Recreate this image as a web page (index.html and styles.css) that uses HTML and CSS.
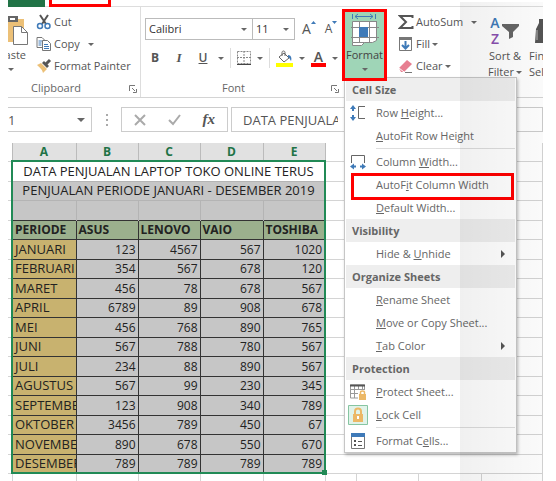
FILE: index.html
```html
<!DOCTYPE html>
<html lang="en">
<head>
<meta charset="utf-8">
<title>Laptop sales</title>
<link rel="stylesheet" href="styles.css">
</head>
<body>
<main class="app">
  <div class="tabs"><span class="tab-file"></span><span class="tab-home"></span></div>

  <section class="ribbon">
    <div class="group clipboard">
      <div class="clip-body">
        <button class="paste" aria-label="Paste">
          <svg width="20" height="30" viewBox="0 0 20 30"><path d="M0 4h16v23H0z" fill="#ecc077"/><path d="M0 1h10v6H0z" fill="#666"/><path d="M2 3h5v2H2z" fill="#fff"/><path d="M5.500 11.500h8l6 6v12h-14z" fill="#fff" stroke="#777"/><path d="M13.500 11.500v6h6" fill="none" stroke="#777"/></svg>
          <span>Paste</span><i class="caret"></i>
        </button>
        <div class="clip-list">
          <button class="cmd"><svg width="16" height="16" viewBox="0 0 16 16"><path d="M4 1l6 9M12 1L6 10" stroke="#555" stroke-width="2"/><circle cx="4" cy="12" r="2.500" fill="none" stroke="#3f7ab8" stroke-width="1.500"/><circle cx="11.500" cy="12" r="2.500" fill="none" stroke="#3f7ab8" stroke-width="1.500"/></svg>Cut</button>
          <button class="cmd"><svg width="16" height="16" viewBox="0 0 16 16"><path d="M1 1.500h5l3 3v7H1z" fill="#fff" stroke="#777"/><path d="M2.500 5h4M2.500 7h3M2.500 9h3" stroke="#3f7ab8"/><path d="M6.500 4.500h5l3 3v7h-8z" fill="#fff" stroke="#777"/><path d="M8 8.500h4M8 10.500h5M8 12.500h5" stroke="#3f7ab8"/></svg>Copy<i class="caret wide"></i></button>
          <button class="cmd"><svg width="16" height="16" viewBox="0 0 16 16"><path d="M1 7l4-2 6 6-4 4c-1-4-3-5-6-8z" fill="#ecc077"/><path d="M6 5l2-2 5 5-2 2z" fill="#555"/><path d="M10 6l4-4" stroke="#555" stroke-width="3"/></svg>Format Painter</button>
        </div>
      </div>
      <div class="label">Clipboard<svg class="launch" width="8" height="8" viewBox="0 0 8 8"><path d="M.5 6V.5H6M3 3l3 3M7.500 4v3.500H4" fill="none" stroke="#777"/></svg></div>
    </div>

    <div class="group font">
      <div class="font-row first">
        <label class="combo family"><select aria-label="Font"><option>Calibri</option></select><i class="caret"></i></label>
        <label class="combo size"><select aria-label="Font size"><option>11</option></select><i class="caret"></i></label>
        <button class="glyph grow" aria-label="Increase font size">A<svg width="5" height="4" viewBox="0 0 5 4"><path d="M0 3l2.500-3L5 3z" fill="#3f7ab8"/></svg></button>
        <button class="glyph shrink" aria-label="Decrease font size">A<svg width="5" height="4" viewBox="0 0 5 4"><path d="M0 0h5L2.500 3z" fill="#3f7ab8"/></svg></button>
      </div>
      <div class="font-row second">
        <button class="glyph letter"><b>B</b></button>
        <button class="glyph letter italic">I</button>
        <button class="glyph letter under">U</button><i class="caret"></i>
        <i class="rule"></i>
        <button class="glyph" aria-label="Borders"><svg width="14" height="14" viewBox="0 0 14 14"><path d="M.5.500h13v12H.5zM7 0v13M0 6.500h14" fill="none" stroke="#888" stroke-dasharray="2 1"/><path d="M0 13.500h14" stroke="#444"/></svg></button><i class="caret"></i>
        <i class="rule"></i>
        <button class="glyph" aria-label="Fill color"><svg width="17" height="17" viewBox="0 0 17 17"><path d="M3 7l5-4 5 5-5 4z" fill="#fff" stroke="#666"/><path d="M6 6V2.500c0-2 3-2 3 0V6" fill="none" stroke="#666"/><path d="M12 5c3 0 4 3 3 6-1-1-1-3-3-4z" fill="#3f7ab8"/><path d="M0 13h17v4H0z" fill="#ff0"/></svg></button><i class="caret"></i>
        <button class="glyph fontcolor">A</button><i class="caret"></i>
      </div>
      <div class="label">Font<svg class="launch" width="8" height="8" viewBox="0 0 8 8"><path d="M.5 6V.5H6M3 3l3 3M7.500 4v3.500H4" fill="none" stroke="#777"/></svg></div>
    </div>

    <div class="format-wrap">
      <button class="format">
        <svg width="30" height="33" viewBox="0 0 30 33"><path d="M2.500 1v5M25.500 1v5M5 3.500h18M8 1L5 3.500 8 6M20 1l3 2.500L20 6" fill="none" stroke="#3f7ab8"/><path d="M2.500 8.500h24v19l-4 2h-8l-3 3h-9v-3z" fill="#fff" stroke="#888"/><path d="M9.500 8v22M19.500 8v21M26.500 8v19M1 14.500h28M1 24.500h28M2.500 29.500h12" fill="none" stroke="#888"/><path d="M9 14h9v10H9z" fill="#3f7ab8"/></svg>
        <span>Format</span><i class="caret"></i>
      </button>
      <div class="menu" role="menu">
        <h2>Cell Size</h2>
        <button><svg width="16" height="16" viewBox="0 0 16 16"><path d="M3 2v4M3 10v4" stroke="#3f7ab8" stroke-width="2"/><path d="M0 4l3-4 3 4zM0 12l3 4 3-4z" fill="#3f7ab8"/><path d="M15 1.500H8.500v12H15" fill="none" stroke="#666"/></svg><span>Row <u>H</u>eight...</span></button>
        <button><span><u>A</u>utoFit Row Height</span></button>
        <hr>
        <button><svg width="16" height="16" viewBox="0 0 16 16"><path d="M1.500 9V1.500h13V9" fill="none" stroke="#666"/><path d="M2 12.500h4M10 12.500h4" stroke="#3f7ab8" stroke-width="2"/><path d="M4 9.500l-4 3 4 3zM12 9.500l4 3-4 3z" fill="#3f7ab8"/></svg><span>Column <u>W</u>idth...</span></button>
        <button class="marked"><span>AutoF<u>i</u>t Column Width</span></button>
        <button><span><u>D</u>efault Width...</span></button>
        <h2>Visibility</h2>
        <button><span>Hide &amp; <u>U</u>nhide</span><i class="more"></i></button>
        <h2>Organize Sheets</h2>
        <button><span><u>R</u>ename Sheet</span></button>
        <button><span><u>M</u>ove or Copy Sheet...</span></button>
        <button><span><u>T</u>ab Color</span><i class="more"></i></button>
        <h2>Protection</h2>
        <button><svg width="16" height="16" viewBox="0 0 16 16"><path d="M.5 1h14v13H.5zM4.500 1v13M8.500 1v13M12.500 1v13M0 5.500h15M0 9.500h15" fill="none" stroke="#999"/><path d="M0 1.500h15" stroke="#555" stroke-width="2"/><path d="M8 6h8v10H8z" fill="#fff"/><path d="M9 10h7v6H9z" fill="#ecb866"/><path d="M10.500 10V8.500c0-2 4-2 4 0V10" fill="none" stroke="#ecb866" stroke-width="1.500"/></svg><span><u>P</u>rotect Sheet...</span></button>
        <button><svg class="lock" width="20" height="20" viewBox="0 0 20 20"><path d="M.5.500h19v19H.5z" fill="#e1f3e9" stroke="#86c5a2"/><path d="M5 9h10v8H5z" fill="#ecb866"/><path d="M7 9V6.500c0-4 6-4 6 0V9" fill="none" stroke="#ecb866" stroke-width="2"/><path d="M10 11v3" stroke="#fff" stroke-width="2"/></svg><span><u>L</u>ock Cell</span></button>
        <hr>
        <button><svg width="16" height="16" viewBox="0 0 16 16"><path d="M1.500 1.500h13v14h-13z" fill="#fff" stroke="#777"/><path d="M1 0h14v4H1z" fill="#3f7ab8"/><path d="M4 7h2v2H4zM4 11h2v2H4zM8 8h4v1H8zM8 12h4v1H8z" fill="#555"/></svg><span>Format C<u>e</u>lls...</span></button>
      </div>
    </div>

    <div class="editing">
      <button class="cmd"><svg width="16" height="16" viewBox="0 0 16 16"><path d="M14.500 4V2H2l6 6-6 6h12.500v-2" fill="none" stroke="#555" stroke-width="2"/></svg>AutoSum<i class="caret wide"></i></button>
      <button class="cmd"><svg width="16" height="16" viewBox="0 0 16 16"><path d="M1.500 1.500h12v13h-12z" fill="#fff" stroke="#777"/><path d="M1 1h13v3H1z" fill="#777"/><path d="M7.500 5v7M4 9l3.500 3.500L11 9" fill="none" stroke="#3f7ab8" stroke-width="2"/></svg>Fill<i class="caret"></i></button>
      <button class="cmd"><svg width="16" height="16" viewBox="0 0 16 16"><path d="M1 10l8-8 5 4-8 8H3z" fill="#e77e90"/><path d="M1 10l5 4" stroke="#fff"/><path d="M7 14.500h7" stroke="#777"/></svg>Clear<i class="caret"></i></button>
    </div>

    <button class="tall sort">
      <span class="sort-icon"><span class="az"><b>A</b><b>Z</b></span><svg width="18" height="18" viewBox="0 0 18 18"><path d="M0 2h17v2l-6 6v5l-4 2v-7L0 4z" fill="#666"/></svg></span>
      <span>Sort &amp;</span><span>Filter<i class="caret"></i></span>
    </button>
    <button class="tall find">
      <svg width="14" height="26" viewBox="0 0 14 26"><path d="M3 12l3-6V2h4v4h1V0h3v26H2z" fill="#555"/><path d="M4 23V13" stroke="#bbb"/></svg>
      <span>Find &amp;</span><span>Select</span>
    </button>
  </section>

  <section class="formula">
    <label class="namebox"><input aria-label="Name box" value="1"><i class="caret"></i></label>
    <span class="dots"><i></i><i></i><i></i></span>
    <div class="entry">
      <button aria-label="Cancel"><svg width="12" height="12" viewBox="0 0 12 12"><path d="M1 1l10 10M11 1L1 11" stroke="#aaa" stroke-width="2"/></svg></button>
      <button aria-label="Enter"><svg width="13" height="12" viewBox="0 0 13 12"><path d="M1 6l4 4 7-9" fill="none" stroke="#aaa" stroke-width="2"/></svg></button>
      <button class="fx">fx</button>
    </div>
    <div class="content"><input aria-label="Formula" value="DATA PENJUALAN"></div>
  </section>

  <section class="sheet">
    <table>
      <colgroup><col class="c0"><col class="c1"><col class="c2"><col class="c2"><col class="c3"><col class="c2"><col class="c4"><col class="c2"><col class="c3"><col></colgroup>
      <thead><tr><td class="gut"></td><th>A</th><th>B</th><th>C</th><th>D</th><th>E</th><td class="rest" colspan="4"></td></tr></thead>
      <tbody>
        <tr class="title"><td class="gut"></td><td class="a e" colspan="5">DATA PENJUALAN LAPTOP TOKO ONLINE TERUS</td><td class="rest" colspan="4"></td></tr>
        <tr class="title sub"><td class="gut"></td><td class="a e" colspan="5">PENJUALAN PERIODE JANUARI - DESEMBER 2019</td><td class="rest" colspan="4"></td></tr>
        <tr class="blank"><td class="gut"></td><td class="a"></td><td></td><td></td><td></td><td class="e"></td><td class="rest" colspan="4"></td></tr>
        <tr class="names"><td class="gut"></td><td class="a">PERIODE</td><td>ASUS</td><td>LENOVO</td><td>VAIO</td><td class="e">TOSHIBA</td><td class="rest" colspan="4"></td></tr>
        <tr class="data"><td class="gut"></td><td class="a">JANUARI</td><td>123</td><td>4567</td><td>567</td><td class="e">1020</td><td class="rest" colspan="4"></td></tr>
        <tr class="data"><td class="gut"></td><td class="a">FEBRUARI</td><td>354</td><td>567</td><td>678</td><td class="e">120</td><td class="rest" colspan="4"></td></tr>
        <tr class="data"><td class="gut"></td><td class="a">MARET</td><td>456</td><td>78</td><td>678</td><td class="e">567</td><td class="rest" colspan="4"></td></tr>
        <tr class="data"><td class="gut"></td><td class="a">APRIL</td><td>6789</td><td>89</td><td>908</td><td class="e">678</td><td class="rest" colspan="4"></td></tr>
        <tr class="data"><td class="gut"></td><td class="a">MEI</td><td>456</td><td>768</td><td>890</td><td class="e">765</td><td class="rest" colspan="4"></td></tr>
        <tr class="data"><td class="gut"></td><td class="a">JUNI</td><td>567</td><td>788</td><td>780</td><td class="e">567</td><td class="rest" colspan="4"></td></tr>
        <tr class="data"><td class="gut"></td><td class="a">JULI</td><td>234</td><td>88</td><td>890</td><td class="e">567</td><td class="rest" colspan="4"></td></tr>
        <tr class="data"><td class="gut"></td><td class="a">AGUSTUS</td><td>567</td><td>99</td><td>230</td><td class="e">345</td><td class="rest" colspan="4"></td></tr>
        <tr class="data"><td class="gut"></td><td class="a">SEPTEMBER</td><td>123</td><td>908</td><td>340</td><td class="e">789</td><td class="rest" colspan="4"></td></tr>
        <tr class="data"><td class="gut"></td><td class="a">OKTOBER</td><td>3456</td><td>789</td><td>450</td><td class="e">67</td><td class="rest" colspan="4"></td></tr>
        <tr class="data"><td class="gut"></td><td class="a">NOVEMBER</td><td>890</td><td>678</td><td>550</td><td class="e">670</td><td class="rest" colspan="4"></td></tr>
        <tr class="data last"><td class="gut"></td><td class="a">DESEMBER</td><td>789</td><td>789</td><td>789</td><td class="e">789<i class="handle"></i></td><td class="rest"></td><td class="rest"></td><td class="rest"></td><td class="rest"></td></tr>
        <tr class="tail"><td class="gut"></td><td></td><td></td><td></td><td></td><td></td><td></td><td></td><td></td><td></td></tr>
      </tbody>
    </table>
  </section>
  <div class="shade"></div>
</main>
</body>
</html>
```
FILE: styles.css
```css
* { box-sizing: border-box; }
body {
  margin: 0;
  background: #fff;
  color: #555;
  font: 11px/16px "Open Sans", "Noto Sans", sans-serif;
}
button, input, select {
  margin: 0;
  padding: 0;
  border: 0;
  background: none;
  color: inherit;
  font: inherit;
}
svg { display: block; flex: none; }
.app {
  position: relative;
  height: 100vh;
  margin: 0 13px 0 8px;
  overflow: hidden;
}
.caret {
  flex: none;
  border: 3px solid transparent;
  border-top-color: #666;
  border-bottom: 0;
}
.caret.wide { margin-left: 6px; }

.tabs { display: flex; gap: 4px; height: 7px; border-bottom: 1px solid #ddd; }
.tab-file { width: 37px; height: 7px; background: #217346; }
.tab-home { width: 62px; height: 7px; border: solid #f00; border-width: 0 3px 3px; }

.ribbon { display: flex; height: 91px; border-bottom: 1px solid #d4d4d4; }
.group { display: flex; flex-direction: column; flex: none; padding-top: 4px; }
.label {
  position: relative;
  margin-top: auto;
  padding-bottom: 1px;
  text-align: center;
  color: #666;
}
.launch { position: absolute; right: 3px; top: 5px; }
.clipboard { width: 133px; border-right: 1px solid #ddd; }
.clipboard .label { padding-right: 36px; }
.clip-body { display: flex; gap: 8px; }
.paste {
  display: flex;
  flex-direction: column;
  align-items: flex-end;
  width: 20px;
  padding-top: 4px;
  overflow: hidden;
}
.paste span { padding: 2px 2px 0 0; }
.paste .caret { margin: 5px 14px 0 0; }
.cmd { display: flex; align-items: center; gap: 2px; height: 22px; white-space: nowrap; }
.font { width: 201px; padding-left: 4px; }
.font .label { padding-right: 20px; }
.font-row { display: flex; align-items: center; }
.first { padding-top: 7px; }
.combo {
  display: flex;
  align-items: center;
  height: 22px;
  padding: 0 5px 0 3px;
  border: 1px solid #bbb;
}
.combo select { flex: 1; min-width: 0; appearance: none; color: #333; }
.family { width: 108px; }
.size { width: 42px; border-left: 0; }
.glyph { display: flex; align-items: center; color: #555; }
.grow { margin-left: 7px; font-size: 14px; }
.shrink { margin-left: 9px; font-size: 12px; }
.grow svg, .shrink svg { align-self: flex-start; }
.second { height: 36px; padding: 0 4px 0 1px; justify-content: space-between; font-size: 12px; }
.letter { justify-content: center; width: 18px; }
.italic { font: italic bold 13px "Liberation Serif", serif; }
.under { font-weight: 600; text-decoration: underline; }
.rule { width: 1px; height: 20px; background: #ddd; }
.fontcolor { justify-content: center; width: 15px; height: 17px; border-bottom: 4px solid #f00; font-size: 14px; font-weight: 600; line-height: 13px; }

.format-wrap { position: relative; flex: none; width: 45px; padding-top: 2px; }
.format {
  position: relative;
  z-index: 3;
  display: flex;
  flex-direction: column;
  align-items: center;
  width: 100%;
  height: 72px;
  padding-top: 1px;
  border: 3px solid #f00;
  background: #9fd5b7;
  color: #444;
}
.format span { padding-top: 1px; }
.format .caret { margin-top: 5px; }
.menu {
  position: absolute;
  z-index: 2;
  top: 70px;
  left: 2px;
  width: 173px;
  padding: 0 1px;
  border: 1px solid #c6c6c6;
  background: #fff;
  box-shadow: 1px 2px 3px #0004;
}
.menu h2 {
  margin: 0;
  padding-left: 6px;
  background: #eee;
  color: #666;
  font-size: 11px;
  font-weight: 700;
  line-height: 23px;
}
.menu button {
  display: grid;
  grid-template-columns: 26px 1fr auto;
  align-items: center;
  width: 100%;
  height: 23px;
  padding-left: 4px;
  text-align: left;
  color: #666;
}
.menu button > span { grid-column: 2; white-space: nowrap; }
.menu button > svg { grid-column: 1; grid-row: 1; }
.menu .lock { margin-left: -2px; }
.menu hr { margin: 1px 0 1px 30px; height: 1px; border: 0; background: #ddd; }
.menu .marked { position: relative; }
.marked::after { content: ""; position: absolute; inset: 0 1px -4px 5px; border: 3px solid #f00; }
.more { margin-right: 10px; border: 4px solid transparent; border-left-color: #555; border-right: 0; }

.editing { flex: none; width: 101px; padding: 4px 0 0 11px; }
.tall {
  display: flex;
  flex: none;
  flex-direction: column;
  align-items: center;
  padding-top: 7px;
  white-space: nowrap;
}
.tall span { display: flex; align-items: center; gap: 2px; }
.sort { width: 34px; }
.sort-icon { height: 34px; }
.sort-icon .az { display: flex; flex-direction: column; gap: 0; font-size: 14px; line-height: 16px; color: #8a50b0; }
.az b { font-weight: 600; }
.az b:first-child { color: #3f7ab8; }
.find { flex: 1; align-items: flex-start; padding-left: 7px; overflow: hidden; }
.find svg { margin: 3px 0 5px 4px; }

.formula { display: flex; height: 25px; margin-top: 9px; font-size: 13px; }
.namebox, .entry, .content { display: flex; align-items: center; border: 1px solid #ccc; }
.namebox { width: 84px; padding-right: 6px; border-left: 0; }
.namebox input { flex: 1; min-width: 0; }
.namebox .caret { border-width: 4px 4px 0; }
.dots { display: flex; flex-direction: column; justify-content: center; align-items: center; gap: 3px; width: 29px; }
.dots i { width: 2px; height: 2px; background: #aaa; }
.entry { width: 107px; padding: 0 12px; justify-content: space-between; }
.fx { font: italic bold 15px "Liberation Serif", serif; }
.content { flex: 1; margin-left: 3px; padding-left: 11px; }
.content input { width: 95px; }

.sheet { margin-top: 11px; color: #222; font: 12px/17px "Open Sans", "Noto Sans", sans-serif; }
table { width: 100%; table-layout: fixed; border-collapse: collapse; border-right: 1px solid #d4d4d4; }
.c0 { width: 4px; }
.c1 { width: 64px; }
.c2 { width: 62px; }
.c3 { width: 63px; }
.c4 { width: 31px; }
td, th { padding: 0 2px; overflow: hidden; white-space: nowrap; }
thead tr { height: 18px; }
th { border: solid #bbb; border-width: 0 1px; border-bottom: 2px solid #218a56; background: #e1e1e1; color: #217346; font-weight: 700; }
tbody tr { height: 19px; }
tbody tr:nth-child(odd) { height: 20px; }
.gut, .rest { border-bottom: 1px solid #d4d4d4; }
.a { border-left: 2px solid #218a56; }
.e { border-right: 2px solid #218a56; }
.title { text-align: center; }
.title .a, .data .a { font-size: 13px; }
.sub td:nth-child(2), .blank td:not(.gut, .rest) { background: #c6c6c6; border-top: 1px solid #b4b4b4; }
.blank td:not(.gut, .rest, .a) { border-left: 1px solid #b4b4b4; }
.names { font-weight: 700; }
.names td:not(.gut, .rest) { background: #9bb08d; border-top: 1px solid #333; }
.names td:not(.gut, .rest, .a), .data td:not(.gut, .rest, .a) { border-left: 1px solid #333; }
.data { text-align: right; }
.data td:not(.gut, .rest) { background: #c6c6c6; border-top: 1px solid #333; }
.data td.a { background: #c8b26f; text-align: left; }
.last td:not(.gut, .rest) { border-bottom: 2px solid #218a56; }
.last .e { position: relative; overflow: visible; }
.handle { position: absolute; right: -3px; bottom: -3px; width: 5px; height: 5px; background: #218a56; }
tbody .tail { height: 9px; }
.tail td { border-right: 1px solid #d4d4d4; }

.shade {
  position: absolute;
  z-index: 4;
  inset: 2px 0 0 auto;
  width: 83px;
  background: linear-gradient(90deg, #0000000f, #00000005);
  pointer-events: none;
}
```
